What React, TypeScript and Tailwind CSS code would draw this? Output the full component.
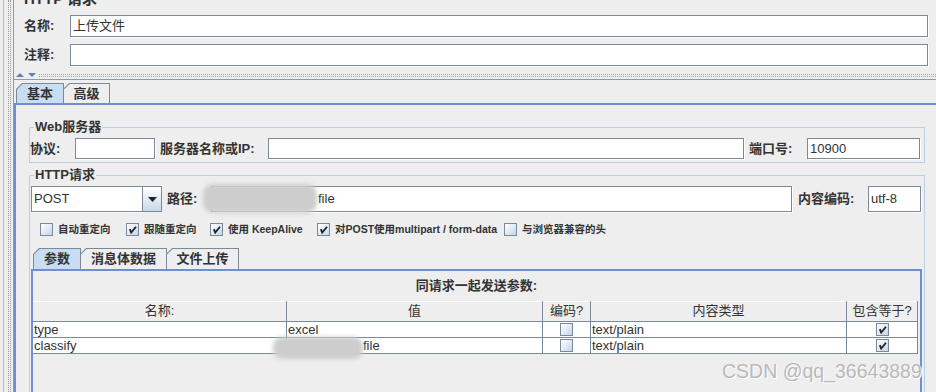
import React from 'react';

// JMeter "HTTP请求" sampler panel, Metal/Ocean look
const FONT = "font-['Liberation_Sans','Noto_Sans_CJK_SC',sans-serif]";

function Input({ value, className = '' }: { value?: string; className?: string }) {
  return (
    <div
      className={`flex items-center border border-[#7a8a99] bg-white pl-[2px] text-[13px] text-[#333] shadow-[1px_1px_0_#fff] ${className}`}
    >
      {value}
    </div>
  );
}

function Check({ on }: { on?: boolean }) {
  return (
    <span className="flex h-[13px] w-[13px] shrink-0 items-center justify-center border border-[#7a8a99] bg-gradient-to-br from-white to-[#c4d6ea]">
      {on && (
        <svg width="9" height="9" viewBox="0 0 9 9">
          <path d="M1.8 4.2 L3.2 7.6 L8 1.8" stroke="#222" strokeWidth="1.8" fill="none" />
        </svg>
      )}
    </span>
  );
}

function Tab({ label, active, className = '' }: { label: string; active?: boolean; className?: string }) {
  return (
    <div
      className={`h-full bg-[#7a8a99] px-[1px] pt-[1px] [clip-path:polygon(6px_0,100%_0,100%_100%,0_100%,0_6px)] ${className}`}
    >
      <div
        className={`flex h-full items-center justify-center text-[13px] font-bold text-[#333] [clip-path:polygon(5.6px_0,100%_0,100%_100%,0_100%,0_5.6px)] ${
          active ? 'bg-[#c8ddf2]' : 'bg-[#eeeeee]'
        }`}
      >
        {label}
      </div>
    </div>
  );
}

const opts = [
  { label: '自动重定向', on: false, w: 'w-[86px]' },
  { label: '跟随重定向', on: true, w: 'w-[84px]' },
  { label: '使用 KeepAlive', on: true, w: 'w-[107px]' },
  { label: '对POST使用multipart / form-data', on: true, w: 'w-[187px]' },
  { label: '与浏览器兼容的头', on: false, w: '' },
];

const params = [
  { name: 'type', value: 'excel', type: 'text/plain' },
  { name: 'classify', value: 'file', type: 'text/plain' },
];

export default function App() {
  return (
    <div className={`relative flex h-[392px] w-[936px] overflow-hidden bg-[#eeeeee] text-[#333] ${FONT}`}>
      {/* split pane divider on the left */}
      <div className="flex w-[14px] shrink-0">
        <div className="w-[3px]" />
        <div className="w-[1px] bg-[#a9bdd8]" />
        <div className="w-[4px]" />
        <div className="w-[3px] border-x border-dotted border-[#9a9a9a]" />
        <div className="w-[2px]" />
        <div className="w-[1px] bg-[#8a9bb0]" />
      </div>

      <div className="min-w-0 flex-1">
        <div className="h-[15px] overflow-hidden pl-[10px]">
          <div className="-mt-[9px] text-[15px] font-bold leading-[15px]">HTTP 请求</div>
        </div>
        <div className="flex h-[22px] items-center pl-[10px] pr-[8px]">
          <span className="w-[46px] shrink-0 text-[13px] font-bold">名称:</span>
          <Input value="上传文件" className="h-full flex-1" />
        </div>
        <div className="mt-[7px] flex h-[22px] items-center pl-[10px] pr-[8px]">
          <span className="w-[46px] shrink-0 text-[13px] font-bold">注释:</span>
          <Input className="h-full flex-1" />
        </div>

        <div className="mt-[6px] flex h-[6px] items-center">
          <svg width="23" height="6" viewBox="0 0 23 6" className="ml-[2px] shrink-0">
            <path d="M0 5 L4 1 L8 5Z" fill="#5f7fc0" />
            <path d="M12 1 L20 1 L16 5Z" fill="#5f7fc0" />
          </svg>
          <div className="h-[3px] flex-1 border-y border-dotted border-[#a0a0a0]" />
        </div>
        <div className="mt-[1px] h-[1px] bg-[#8a9bb0]" />

        <div className="mt-[3px] flex h-[20px] pl-[2px]">
          <Tab label="基本" active className="w-[48px]" />
          <Tab label="高级" className="-ml-[1px] w-[47px]" />
        </div>

        <div className="h-[300px] border-l-2 border-t-2 border-[#6f8fcf]">
          <fieldset className="ml-[13px] mr-[11px] mt-[14px] border border-[#b8cfe5] pb-[3px] pt-[3px]">
            <legend className="ml-[4px] px-[1px] text-[13px] font-bold leading-[16px]">Web服务器</legend>
            <div className="flex h-[21px] items-center text-[13px] font-bold">
              <span className="w-[45px] shrink-0">协议:</span>
              <Input className="h-full w-[80px] shrink-0" />
              <span className="ml-[5px] w-[108px] shrink-0">服务器名称或IP:</span>
              <Input className="h-full flex-1" />
              <span className="ml-[5px] w-[58px] shrink-0">端口号:</span>
              <Input value="10900" className="h-full w-[113px] shrink-0 font-normal" />
              <div className="w-[4px] shrink-0" />
            </div>
          </fieldset>

          <fieldset className="ml-[13px] mr-[11px] mt-[4px] border border-[#b8cfe5] pt-[3px]">
            <legend className="ml-[4px] px-[1px] text-[13px] font-bold leading-[16px]">HTTP请求</legend>
            <div className="relative flex h-[26px] items-center text-[13px] font-bold">
              <div className="ml-[1px] flex h-full w-[131px] shrink-0">
                <Input value="POST" className="h-full flex-1 font-normal" />
                <div className="flex h-full w-[19px] items-center justify-center border-y border-r border-[#7a8a99] bg-gradient-to-b from-white to-[#c8d8e8]">
                  <svg width="9" height="5" viewBox="0 0 9 5">
                    <path d="M0 0 L9 0 L4.5 5Z" fill="#222" />
                  </svg>
                </div>
              </div>
              <span className="ml-[5px] w-[44px] shrink-0">路径:</span>
              <Input value="file" className="h-full flex-1 pl-[106px] font-normal" />
              <span className="ml-[6px] w-[70px] shrink-0">内容编码:</span>
              <Input value="utf-8" className="h-full w-[53px] shrink-0 font-normal" />
              <div className="w-[3px] shrink-0" />
              <div className="absolute left-[173px] top-[-2px] h-[29px] w-[114px] rounded-[10px] bg-[#cdcdcd] blur-[2px]" />
            </div>

            <div className="ml-[10px] mt-[11px] flex h-[13px] items-center">
              {opts.map((o) => (
                <div key={o.label} className={`flex shrink-0 items-center gap-[5px] ${o.w}`}>
                  <Check on={o.on} />
                  <span className="whitespace-nowrap text-[10.5px] font-bold leading-[13px]">{o.label}</span>
                </div>
              ))}
            </div>

            <div className="ml-[1px] mr-[2px] mt-[12px]">
              <div className="flex h-[21px] pl-[2px]">
                <Tab label="参数" active className="w-[48px]" />
                <Tab label="消息体数据" className="-ml-[1px] w-[87px]" />
                <Tab label="文件上传" className="-ml-[1px] w-[73px]" />
              </div>
              <div className="border-x-2 border-t-2 border-[#6f8fcf]">
                <div className="flex h-[30px] items-center justify-center text-[13px] font-bold">同请求一起发送参数:</div>
                <div className="relative mr-[1px]">
                  <div className="grid grid-cols-[254px_256px_48px_256px_71px]">
                    {['名称:', '值', '编码?', '内容类型', '包含等于?'].map((h) => (
                      <div
                        key={h}
                        className="flex h-[21px] items-center justify-center border-b border-r border-[#7a8a99] bg-[#eeeeee] text-[13px] shadow-[inset_0_1px_0_#fff]"
                      >
                        {h}
                      </div>
                    ))}
                    {params.map((p, i) => (
                      <React.Fragment key={p.name}>
                        <div className="flex h-[16px] items-center border-b border-r border-[#7a8a99] bg-white pl-[1px] text-[13px] leading-[15px]">
                          {p.name}
                        </div>
                        <div
                          className={`flex h-[16px] items-center border-b border-r border-[#7a8a99] bg-white text-[13px] leading-[15px] ${
                            i === 1 ? 'pl-[76px]' : 'pl-[1px]'
                          }`}
                        >
                          {p.value}
                        </div>
                        <div className="flex h-[16px] items-center justify-center border-b border-r border-[#7a8a99] bg-white">
                          <Check />
                        </div>
                        <div className="flex h-[16px] items-center border-b border-r border-[#7a8a99] bg-white pl-[1px] text-[13px] leading-[15px]">
                          {p.type}
                        </div>
                        <div className="flex h-[16px] items-center justify-center border-b border-r border-[#7a8a99] bg-white">
                          <Check on />
                        </div>
                      </React.Fragment>
                    ))}
                  </div>
                  <div className="absolute left-[240px] top-[36px] h-[22px] w-[90px] rounded-[9px] bg-[#cdcdcd] blur-[2px]" />
                </div>
                <div className="h-[60px]" />
              </div>
            </div>
          </fieldset>
        </div>
      </div>

      <div className="absolute left-[722px] top-[359px] text-[19.5px] leading-[24px] text-[#b9b9b9] [text-shadow:1px_1px_0_#fff]">
        CSDN @qq_36643889
      </div>
    </div>
  );
}
